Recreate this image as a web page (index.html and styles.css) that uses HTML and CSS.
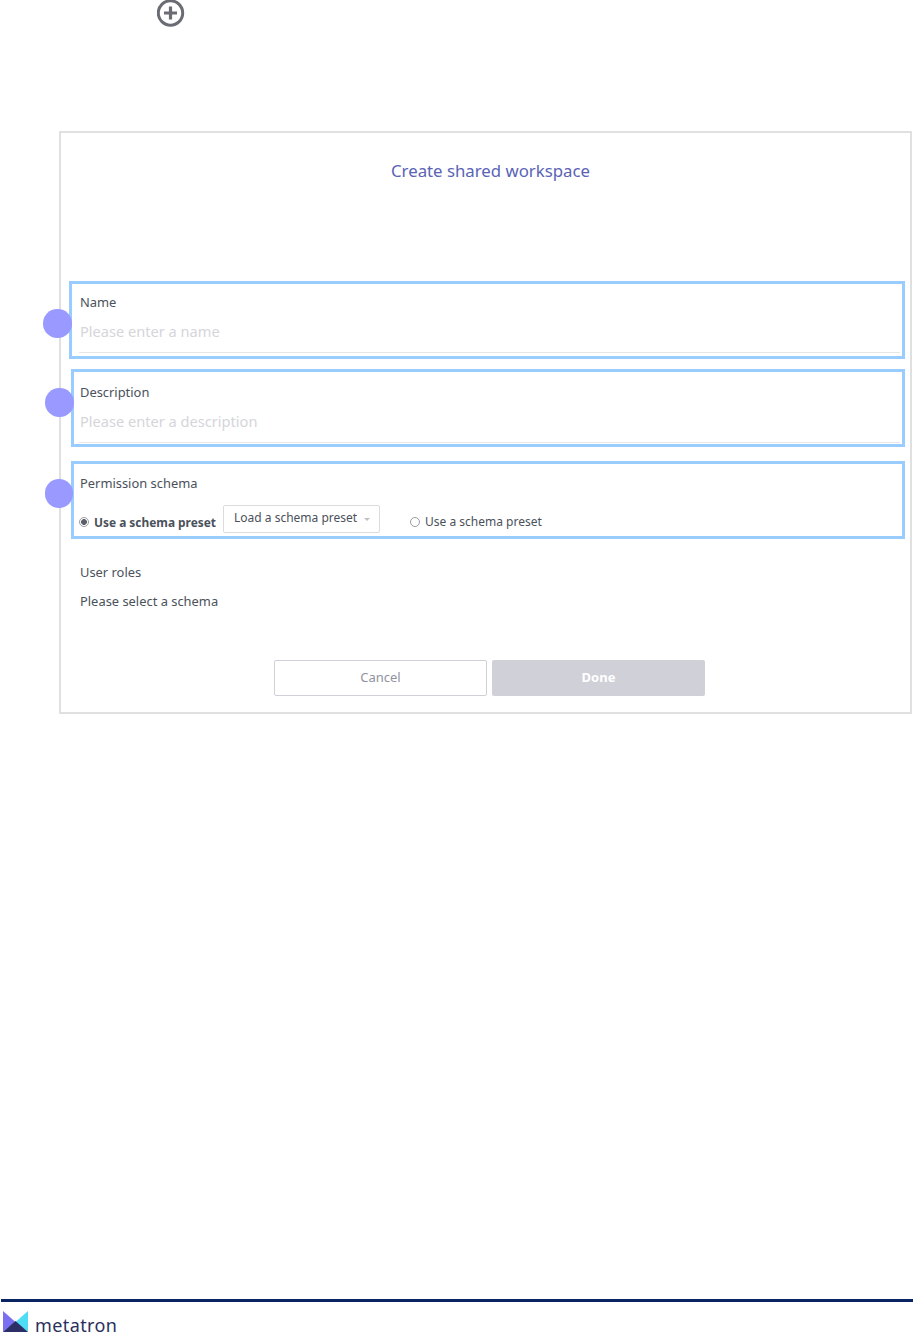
FILE: index.html
```html
<!DOCTYPE html>
<html lang="en">
<head>
<meta charset="utf-8">
<title>Create shared workspace</title>
<link rel="stylesheet" href="styles.css">
</head>
<body>
<div class="page">
  <div class="top">
    <svg class="plus" width="28" height="28" viewBox="0 0 28 28"><circle cx="13.5" cy="13" r="12.2" fill="none" stroke="#6a6c74" stroke-width="3"/><path d="M13.5 6.5v13M7 13h13" stroke="#6a6c74" stroke-width="3.2" fill="none"/></svg>
  </div>
  <section class="panel">
    <h1 class="title">Create shared workspace</h1>
    <div class="field field-name">
      <span class="dot"></span>
      <div class="label">Name</div>
      <div class="input">Please enter a name</div>
    </div>
    <div class="field field-desc">
      <span class="dot"></span>
      <div class="label">Description</div>
      <div class="input">Please enter a description</div>
    </div>
    <div class="field field-perm">
      <span class="dot"></span>
      <div class="label">Permission schema</div>
      <div class="options">
        <span class="radio on"></span>
        <span class="opt bold">Use a schema preset</span>
        <span class="select">Load a schema preset<i class="caret"></i></span>
        <span class="radio off"></span>
        <span class="opt">Use a schema preset</span>
      </div>
    </div>
    <div class="roles">
      <div class="roles-title">User roles</div>
      <div class="roles-text">Please select a schema</div>
    </div>
    <div class="actions">
      <button class="btn cancel">Cancel</button>
      <button class="btn done">Done</button>
    </div>
  </section>
  <footer class="footer">
    <svg class="logo" width="25" height="21" viewBox="0 0 25 21"><path d="M0 0L12.5 11 0 21z" fill="#7a6ff0"/><path d="M25 0L12.5 11 25 21z" fill="#4fdcf5"/><path d="M0 21L12.5 10 25 21z" fill="#2b2f66"/></svg>
    <span class="brand">metatron</span>
  </footer>
</div>
</body>
</html>
```

FILE: styles.css
```css
* { box-sizing: border-box; }
html, body { margin: 0; padding: 0; background: #fff; }
body { font-family: "Noto Sans", "Open Sans", sans-serif; color: #4b515b; }
.page { width: 913px; height: 1333px; overflow: hidden; display: flex; flex-direction: column; }
.top { height: 131px; padding-left: 157px; flex: none; }
.plus { display: block; }
.panel { width: 853px; height: 583px; margin-left: 59px; border: 2px solid #e0e0e0; padding-top: 27px; flex: none; }
.title { margin: 0; height: 121px; text-align: center; font-size: 16.8px; font-weight: 400; line-height: 22px; color: #5a63b5; padding-left: 10px; }
.field { position: relative; width: 836px; height: 78px; margin-left: 8px; border: 3px solid #99ccff; padding: 9px 0 0 7px; }
.field-desc { width: 834px; margin: 10px 0 0 10px; padding: 11px 0 0 5px; }
.field-perm { width: 834px; margin: 14px 0 0 10px; padding: 10px 0 0 5px; }
.dot { position: absolute; width: 28.5px; height: 28.5px; border-radius: 50%; background: #9999ff; left: -29px; top: 25px; }
.field-desc .dot { top: 16px; }
.field-perm .dot { left: -29.5px; top: 15px; }
.label { padding-left: 1px; font-size: 12.9px; line-height: 18px; color: #4b515b; }
.input { margin: 10px 2px 0 0; padding-left: 1px; height: 32px; font-size: 14.6px; line-height: 20px; color: #d5d5da; border-bottom: 1px solid #e6e6e6; }
.options { display: flex; align-items: center; margin-top: 13px; font-size: 12px; line-height: 16px; }
.radio { width: 10px; height: 10px; border-radius: 50%; border: 1px solid #9a9ca3; background: #fff; flex: none; margin-top: 6px; }
.radio.on { background: radial-gradient(circle, #5c5f68 0 2.6px, #fff 3.2px); }
.radio.off { margin-left: 30px; }
.opt { margin: 6px 0 0 5px; }
.opt.bold { font-size: 11.9px; font-weight: 700; }
.select { display: flex; align-items: center; width: 157px; height: 28px; margin-left: 7px; padding: 0 0 2px 10px; border: 1px solid #dcdcdc; border-radius: 2px; color: #4b515b; }
.caret { width: 0; height: 0; margin: 3px 0 0 7px; border: 3.5px solid transparent; border-top: 3px solid #c0c0c5; border-bottom: 0; }
.roles { padding: 24px 0 0 19px; font-size: 12.9px; line-height: 18px; }
.roles-text { margin-top: 11px; }
.actions { display: flex; gap: 5px; margin: 50px 0 0 213px; }
.btn { width: 213px; height: 36px; border-radius: 2px; font-family: inherit; font-size: 13px; padding: 0 0 2px; }
.cancel { background: #fff; border: 1px solid #d0d0d8; color: #90939f; }
.done { background: #d0d0d8; border: 0; color: #fff; font-weight: 700; }
.footer { margin: auto 0 0 1px; height: 34px; border-top: 3px solid #0a2463; display: flex; align-items: flex-start; padding: 9px 0 0 2px; flex: none; }
.logo { display: block; flex: none; }
.brand { margin: 7px 0 0 7px; font-size: 18px; line-height: 14px; color: #2b2f5e; letter-spacing: .4px; }
```
